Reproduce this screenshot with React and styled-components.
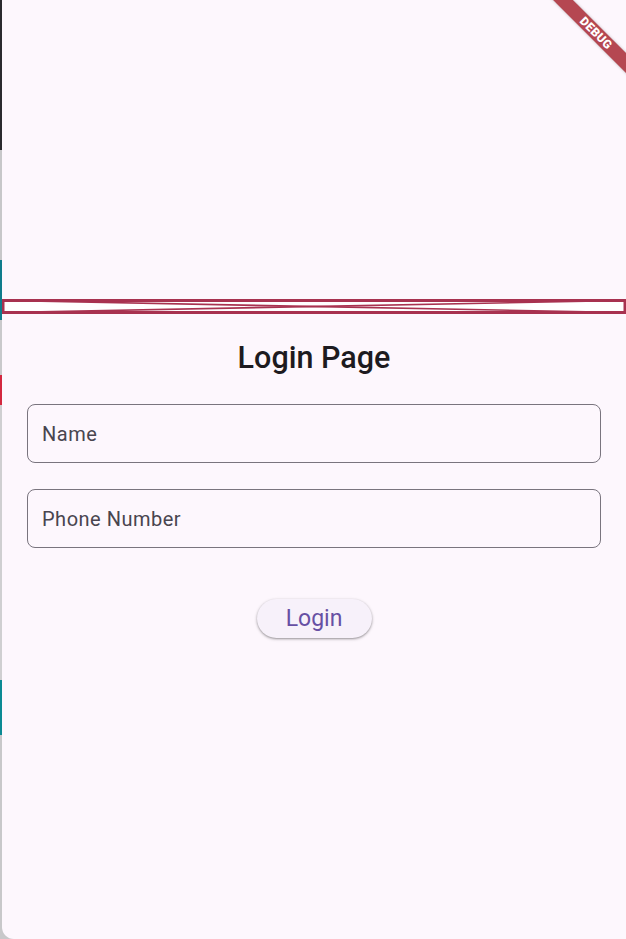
import React from "react";
import styled, { createGlobalStyle } from "styled-components";

const GlobalStyle = createGlobalStyle`
    html, body {
        margin: 0;
        padding: 0;
        background: #1c1b1f;
    }
    body {
        font-family: Roboto, "Noto Sans", sans-serif;
    }
`;

const Window = styled.div`
    width: 626px;
    height: 939px;
    display: flex;
    background: linear-gradient(#2a2a2e 0, #2a2a2e 150px, #c7c7c9 150px, #c7c7c9 260px, #0f7c8c 260px, #0f7c8c 320px, #c9c9cb 320px, #c9c9cb 375px, #d3283f 375px, #d3283f 405px, #cfcfd1 405px, #cfcfd1 680px, #0b8a94 680px, #0b8a94 735px, #c8c8ca 735px);
    overflow: hidden;
`;

const Screen = styled.div`
    position: relative;
    flex: 1;
    margin-left: 2px;
    background: #fdf7fd;
    border-bottom-left-radius: 12px;
    display: flex;
    flex-direction: column;
    overflow: hidden;
`;

const Spacer = styled.div`
    height: 299px;
    flex-shrink: 0;
`;

const Placeholder = styled.svg`
    display: block;
    width: 624px;
    height: 15px;
    flex-shrink: 0;
`;

const Content = styled.div`
    display: flex;
    flex-direction: column;
    align-items: stretch;
    padding: 0 25px 0 25px;
`;

const Title = styled.h1`
    margin: 26px 0 0 0;
    text-align: center;
    font-size: 30.5px;
    font-weight: 500;
    line-height: 36px;
    color: #1d1b20;
`;

const Field = styled.div`
    height: 57px;
    margin-top: ${(p) => p.$top}px;
    border: 1px solid #79747e;
    border-radius: 8px;
    display: flex;
    align-items: center;
    padding: 0 14px;
    font-size: 20px;
    letter-spacing: 0.5px;
    color: #49454f;
`;

const ButtonRow = styled.div`
    display: flex;
    justify-content: center;
    margin-top: 51px;
`;

const LoginButton = styled.button`
    width: 115px;
    height: 39px;
    border: none;
    border-radius: 20px;
    background: #f7f1fa;
    color: #6750a4;
    font-family: Roboto, "Noto Sans", sans-serif;
    font-size: 23px;
    font-weight: 400;
    box-shadow: 0 1px 2px rgba(0, 0, 0, 0.3), 0 1px 3px 1px rgba(0, 0, 0, 0.1);
    cursor: pointer;
`;

const Banner = styled.div`
    position: absolute;
    left: 534px;
    top: 26px;
    width: 120px;
    height: 14px;
    background: rgba(168, 40, 50, 0.85);
    transform: rotate(45deg);
    display: flex;
    align-items: center;
    justify-content: center;
    color: #fff;
    font-size: 12px;
    font-weight: 900;
    letter-spacing: 0.3px;
    box-shadow: 0 0 3px rgba(0, 0, 0, 0.25);
`;

const App = () => {
    return (
        <>
            <GlobalStyle />
            <Window>
                <Screen>
                    <Spacer />
                    <Placeholder viewBox="0 0 624 15" preserveAspectRatio="none">
                        <rect x="1" y="1.5" width="622" height="12" fill="#ffffff" stroke="#a83250" strokeWidth="3" />
                        <line x1="1" y1="1.5" x2="623" y2="13.5" stroke="#a83250" strokeWidth="1.6" />
                        <line x1="1" y1="13.5" x2="623" y2="1.5" stroke="#a83250" strokeWidth="1.6" />
                    </Placeholder>
                    <Content>
                        <Title>Login Page</Title>
                        <Field $top={28}>Name</Field>
                        <Field $top={26}>Phone Number</Field>
                        <ButtonRow>
                            <LoginButton>Login</LoginButton>
                        </ButtonRow>
                    </Content>
                    <Banner>DEBUG</Banner>
                </Screen>
            </Window>
        </>
    );
};

export default App;
